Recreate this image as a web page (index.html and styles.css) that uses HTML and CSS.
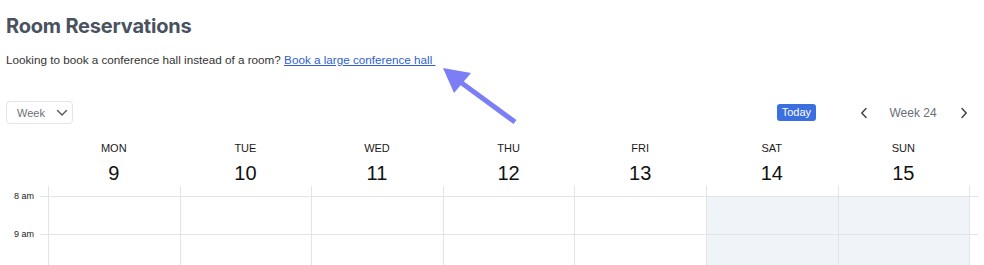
FILE: index.html
```html
<!DOCTYPE html>
<html lang="en">

<head>
    <meta charset="UTF-8">
    <meta name="viewport" content="width=device-width, initial-scale=1.0">
    <title>Room Reservations</title>

    <link rel="stylesheet" href="styles.css">
</head>

<body>

    <main class="page">
        <header class="intro">
            <h1>Room Reservations</h1>
            <p>Looking to book a conference hall instead of a room? <a href="#">Book a large conference hall&nbsp;</a></p>
        </header>

        <!-- annotation arrow pointing at the link -->
        <svg class="pointer" width="90" height="70" viewBox="0 0 90 70">
            <line x1="80" y1="60" x2="24" y2="19" stroke="#7b7ef4" stroke-width="5" />
            <polygon points="8,6 19,31 36,11" fill="#7b7ef4" />
        </svg>

        <div class="toolbar">
            <button class="view-select">Week
                <svg width="12" height="8" viewBox="0 0 12 8"><path d="M1.5 1.5 6 6l4.5-4.5" fill="none" stroke="#555" stroke-width="1.4" stroke-linecap="round" stroke-linejoin="round" /></svg>
            </button>
            <div class="nav">
                <button class="today">Today</button>
                <button class="arrow">
                    <svg width="8" height="12" viewBox="0 0 8 12"><path d="M6 1.5 1.8 6 6 10.5" fill="none" stroke="#444" stroke-width="1.5" stroke-linecap="round" stroke-linejoin="round" /></svg>
                </button>
                <span class="week-label">Week 24</span>
                <button class="arrow">
                    <svg width="8" height="12" viewBox="0 0 8 12"><path d="M2 1.5 6.2 6 2 10.5" fill="none" stroke="#444" stroke-width="1.5" stroke-linecap="round" stroke-linejoin="round" /></svg>
                </button>
            </div>
        </div>

        <section class="calendar">
            <div class="cal-head">
                <div></div>
                <div class="day"><span>MON</span><strong>9</strong></div>
                <div class="day"><span>TUE</span><strong>10</strong></div>
                <div class="day"><span>WED</span><strong>11</strong></div>
                <div class="day"><span>THU</span><strong>12</strong></div>
                <div class="day"><span>FRI</span><strong>13</strong></div>
                <div class="day"><span>SAT</span><strong>14</strong></div>
                <div class="day"><span>SUN</span><strong>15</strong></div>
                <div></div>
            </div>

            <div class="cal-body">
                <div class="gap"></div>
                <div class="gap cell"></div>
                <div class="gap cell"></div>
                <div class="gap cell"></div>
                <div class="gap cell"></div>
                <div class="gap cell"></div>
                <div class="gap cell"></div>
                <div class="gap cell"></div>
                <div class="gap cell"></div>

                <div class="time"><span>8 am</span><i></i></div>
                <div class="slot cell"></div>
                <div class="slot cell"></div>
                <div class="slot cell"></div>
                <div class="slot cell"></div>
                <div class="slot cell"></div>
                <div class="slot cell weekend"></div>
                <div class="slot cell weekend"></div>
                <div class="slot cell end"></div>

                <div class="time"><span>9 am</span><i></i></div>
                <div class="slot cell"></div>
                <div class="slot cell"></div>
                <div class="slot cell"></div>
                <div class="slot cell"></div>
                <div class="slot cell"></div>
                <div class="slot cell weekend"></div>
                <div class="slot cell weekend"></div>
                <div class="slot cell end"></div>
            </div>
        </section>
    </main>

</body>

</html>
```

FILE: styles.css
```css
* {
    margin: 0;
    padding: 0;
    box-sizing: border-box;
}

body {
    background-color: #fff;
    font-family: "Liberation Sans", Arial, sans-serif;
    color: #222;
    overflow: hidden;
}

.page {
    position: relative;
    padding: 14px 0 0 6px;
}

.intro h1 {
    font-family: Inter, "Liberation Sans", sans-serif;
    font-size: 20px;
    font-weight: 700;
    color: #4a5260;
    line-height: 24px;
    letter-spacing: -0.2px;
}

.intro p {
    margin-top: 14px;
    font-size: 11.7px;
    line-height: 16px;
    color: #333;
}

.intro a {
    color: #2f5fd0;
}

.pointer {
    position: absolute;
    left: 435px;
    top: 62px;
}

.toolbar {
    display: flex;
    justify-content: space-between;
    align-items: center;
    margin-top: 33px;
    padding-right: 14px;
}

button {
    font-family: inherit;
    background: none;
    border: none;
    cursor: pointer;
}

.view-select {
    display: flex;
    align-items: center;
    gap: 11px;
    width: 67px;
    height: 23px;
    padding-left: 10px;
    border: 1px solid #e3e5e8;
    border-radius: 4px;
    font-size: 11px;
    color: #6b6f76;
}

.nav {
    display: flex;
    align-items: center;
}

.today {
    background-color: #3b6fe0;
    color: #fff;
    font-size: 11px;
    border-radius: 3px;
    padding: 2px 5px;
    height: 17px;
    line-height: 13px;
    margin-right: 44px;
}

.arrow {
    display: flex;
    align-items: center;
    width: 10px;
    height: 16px;
}

.week-label {
    font-size: 12px;
    color: #6b6f76;
    width: 90px;
    padding-right: 4px;
    text-align: center;
}

.calendar {
    margin-top: 17px;
    margin-left: -6px;
}

.cal-head,
.cal-body {
    display: grid;
    grid-template-columns: 48px repeat(7, 131.6px) 9px;
}

.day {
    display: flex;
    flex-direction: column;
    align-items: center;
}

.day span {
    font-size: 11px;
    line-height: 14px;
    color: #1a1a1a;
}

.day strong {
    margin-top: 6px;
    font-size: 20px;
    font-weight: 400;
    line-height: 24px;
    color: #111;
}

.cal-body {
    margin-top: 1px;
}

.cell {
    border-left: 1px solid #e1e4e8;
}

.gap {
    height: 10px;
}

.slot {
    height: 38px;
    border-top: 1px solid #e1e4e8;
}

.weekend {
    background-color: #f0f4f8;
}

.end {
    background: none;
}

.time {
    display: flex;
    align-items: flex-start;
    gap: 6px;
}

.time span {
    width: 34px;
    margin-top: -6px;
    text-align: right;
    font-size: 9px;
    line-height: 12px;
    color: #222;
}

.time i {
    flex: 1;
    border-top: 1px solid #e1e4e8;
}
```
